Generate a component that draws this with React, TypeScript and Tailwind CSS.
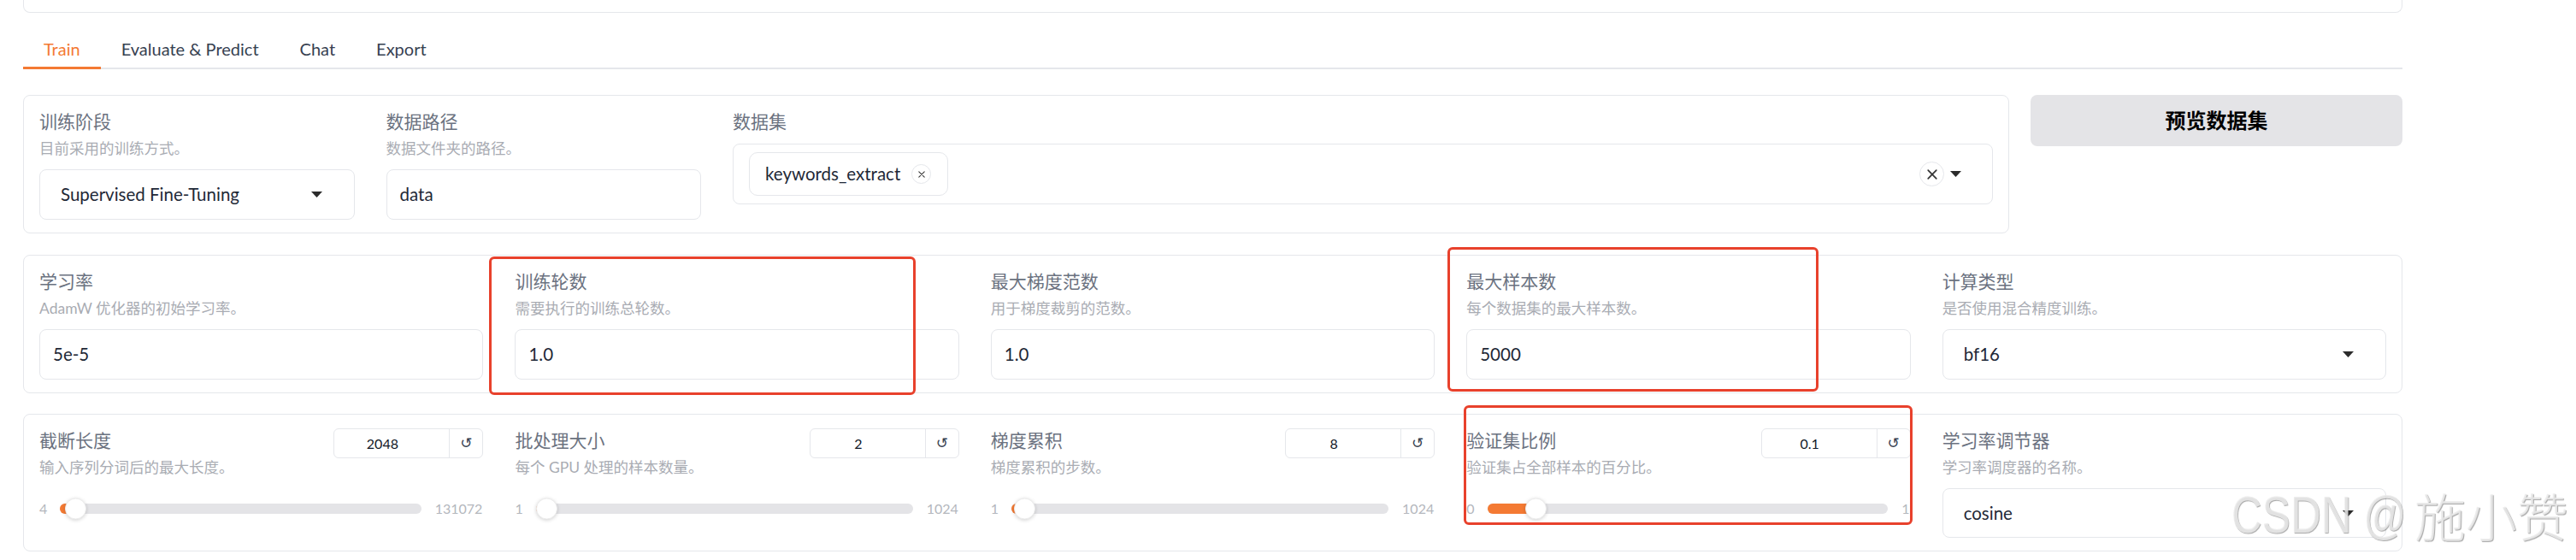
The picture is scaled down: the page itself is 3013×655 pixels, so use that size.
import React from "react";

const SANS = "font-['Lato','Noto_Sans_CJK_SC',sans-serif]";

function Caret() {
  return (
    <svg width="13" height="7" viewBox="0 0 13 7" className="shrink-0">
      <path d="M0 0H13L6.5 7Z" fill="#2b2b2b" />
    </svg>
  );
}

function Cross({ size, stroke }: { size: number; stroke: number }) {
  return (
    <svg width={size} height={size} viewBox="0 0 10 10">
      <path d="M1 1L9 9M9 1L1 9" stroke="#333" strokeWidth={stroke} strokeLinecap="round" />
    </svg>
  );
}

function Label({ children }: { children: React.ReactNode }) {
  return <div className="text-[21px] leading-[28px] text-[#6b7280] whitespace-nowrap">{children}</div>;
}

function Info({ children }: { children: React.ReactNode }) {
  return <div className="mt-[6px] text-[17.5px] leading-[24px] text-[#a9acb3] whitespace-nowrap">{children}</div>;
}

function TextBox({ value }: { value: string }) {
  return (
    <div className="mt-[12px] h-[59px] rounded-[8px] border border-[#e5e7eb] bg-white px-[15px] flex items-center text-[20.5px] text-[#1f2937]">
      {value}
    </div>
  );
}

function Select({ value, h = 59 }: { value: string; h?: number }) {
  return (
    <div
      className={`mt-[12px] ${h === 59 ? "h-[59px]" : "h-[58px]"} rounded-[8px] border border-[#e5e7eb] bg-white pl-[24px] pr-[37px] flex items-center justify-between text-[20.5px] text-[#1f2937]`}
    >
      <span>{value}</span>
      <Caret />
    </div>
  );
}

function Field({ label, info, children }: { label: string; info?: string; children: React.ReactNode }) {
  return (
    <div className="flex-1 min-w-0">
      <Label>{label}</Label>
      {info && <Info>{info}</Info>}
      {children}
    </div>
  );
}

function SliderField({
  label,
  info,
  value,
  min,
  max,
}: {
  label: string;
  info: string;
  value: number;
  min: number;
  max: number;
}) {
  const pct = (value - min) / (max - min);
  return (
    <div className="flex-1 min-w-0">
      <div className="flex items-start justify-between">
        <div>
          <Label>{label}</Label>
          <Info>{info}</Info>
        </div>
        <div className="w-[175px] h-[35px] rounded-[6px] border border-[#e5e7eb] flex bg-white">
          <div className="flex-1 flex items-center justify-center pr-[22px] text-[16px] text-[#111827]">{value}</div>
          <div className="w-[39px] border-l border-[#e5e7eb] flex items-center justify-center text-[17px] text-[#374151] font-['DejaVu_Sans',sans-serif]">
            ↺
          </div>
        </div>
      </div>
      <div className="mt-[23px] h-[25px] flex items-center gap-[15px] text-[16px] text-[#b4b7bd]">
        <span>{min}</span>
        <div className="relative flex-1 h-[12px] rounded-full bg-[#e4e4e7]">
          <div
            className="absolute left-0 top-0 bottom-0 rounded-full bg-[#f47a33]"
            style={{ width: `calc(${pct} * (100% - 25px) + 12.5px)` }}
          />
          <div
            className="absolute top-1/2 -translate-y-1/2 w-[25px] h-[25px] rounded-full bg-white border border-[#ececec] shadow-[0_1px_4px_rgba(0,0,0,0.18)]"
            style={{ left: `calc(${pct} * (100% - 25px))` }}
          />
        </div>
        <span className="ml-[1px] mr-[1px]">{max}</span>
      </div>
    </div>
  );
}

function Card({ children }: { children: React.ReactNode }) {
  return (
    <div className="rounded-[8px] border border-[#e5e7eb] bg-white px-[18px] pt-[16px] pb-[15px] flex items-start gap-[37px]">
      {children}
    </div>
  );
}

const tabs = ["Train", "Evaluate & Predict", "Chat", "Export"];

export default function App() {
  return (
    <div className={`relative w-[3013px] h-[655px] overflow-hidden bg-white ${SANS}`}>
      <div className="ml-[27px] w-[2783px]">
        {/* tail of the block above the tabs */}
        <div className="h-[15px] border-x border-b border-[#e5e7eb] rounded-b-[8px]" />

        {/* tab bar */}
        <div className="flex border-b-2 border-[#e5e7eb]">
          {tabs.map((t, i) => (
            <div
              key={t}
              className={`relative h-[64px] px-[24px] pb-[7px] flex items-end text-[20px] leading-[30px] whitespace-nowrap ${
                i === 0 ? "text-[#f47a33]" : "text-[#374151]"
              }`}
            >
              {t}
              {i === 0 && <span className="absolute left-0 right-0 bottom-[-2px] h-[3px] bg-[#f47a33]" />}
            </div>
          ))}
        </div>

        {/* stage / data row */}
        <div className="mt-[30px] flex items-start gap-[25px]">
          <div className="w-[2323px]">
            <Card>
              <div className="flex-1 min-w-0">
                <Label>训练阶段</Label>
                <Info>目前采用的训练方式。</Info>
                <Select value="Supervised Fine-Tuning" />
              </div>
              <div className="flex-1 min-w-0">
                <Label>数据路径</Label>
                <Info>数据文件夹的路径。</Info>
                <TextBox value="data" />
              </div>
              <div className="flex-[4] min-w-0">
                <Label>数据集</Label>
                <div className="mt-[12px] h-[71px] rounded-[8px] border border-[#e5e7eb] pl-[18px] pr-[36px] flex items-center">
                  <div className="h-[51px] rounded-[10px] border border-[#e5e7eb] pl-[18px] pr-[19px] flex items-center gap-[13px] text-[20.5px] text-[#1f2937]">
                    <span>keywords_extract</span>
                    <span className="w-[23px] h-[23px] rounded-full border border-[#e5e7eb] flex items-center justify-center">
                      <Cross size={8} stroke={1.3} />
                    </span>
                  </div>
                  <div className="ml-auto flex items-center gap-[7px]">
                    <span className="w-[29px] h-[29px] rounded-full border border-[#e5e7eb] flex items-center justify-center">
                      <Cross size={12} stroke={1.4} />
                    </span>
                    <Caret />
                  </div>
                </div>
              </div>
            </Card>
          </div>
          <button className="w-[435px] h-[60px] rounded-[8px] bg-[#e4e4e7] text-[24px] font-bold text-black flex items-center justify-center">
            预览数据集
          </button>
        </div>

        {/* hyper-parameter row */}
        <div className="mt-[25px]">
          <Card>
            <Field label="学习率" info="AdamW 优化器的初始学习率。">
              <TextBox value="5e-5" />
            </Field>
            <Field label="训练轮数" info="需要执行的训练总轮数。">
              <TextBox value="1.0" />
            </Field>
            <Field label="最大梯度范数" info="用于梯度裁剪的范数。">
              <TextBox value="1.0" />
            </Field>
            <Field label="最大样本数" info="每个数据集的最大样本数。">
              <TextBox value="5000" />
            </Field>
            <Field label="计算类型" info="是否使用混合精度训练。">
              <Select value="bf16" />
            </Field>
          </Card>
        </div>

        {/* slider row */}
        <div className="mt-[24px]">
          <Card>
            <SliderField label="截断长度" info="输入序列分词后的最大长度。" value={2048} min={4} max={131072} />
            <SliderField label="批处理大小" info="每个 GPU 处理的样本数量。" value={2} min={1} max={1024} />
            <SliderField label="梯度累积" info="梯度累积的步数。" value={8} min={1} max={1024} />
            <SliderField label="验证集比例" info="验证集占全部样本的百分比。" value={0.1} min={0} max={1} />
            <Field label="学习率调节器" info="学习率调度器的名称。">
              <Select value="cosine" h={58} />
            </Field>
          </Card>
        </div>
      </div>

      {/* hand-drawn highlight frames */}
      <div className="absolute left-[572px] top-[300px] w-[499px] h-[162px] rounded-[6px] border-[3px] border-[#e8412c]" />
      <div className="absolute left-[1693px] top-[289px] w-[434px] h-[169px] rounded-[6px] border-[3px] border-[#e8412c]" />
      <div className="absolute left-[1712px] top-[474px] w-[525px] h-[140px] rounded-[6px] border-[3px] border-[#e8412c]" />

      {/* watermark */}
      <div className="absolute left-[2610px] top-[570px] flex items-center h-[64px] whitespace-nowrap text-[rgba(236,236,236,0.85)] [text-shadow:1px_1px_1px_rgba(0,0,0,0.35)] pointer-events-none">
        <span className="w-[214px] overflow-visible">
          <span className="inline-block origin-left scale-x-[0.8] text-[62px] leading-[64px] font-['Liberation_Sans',sans-serif]">
            CSDN @
          </span>
        </span>
        <span className="text-[60px] leading-[64px] font-light font-['Noto_Sans_CJK_SC',sans-serif]">施小赞</span>
      </div>
    </div>
  );
}
